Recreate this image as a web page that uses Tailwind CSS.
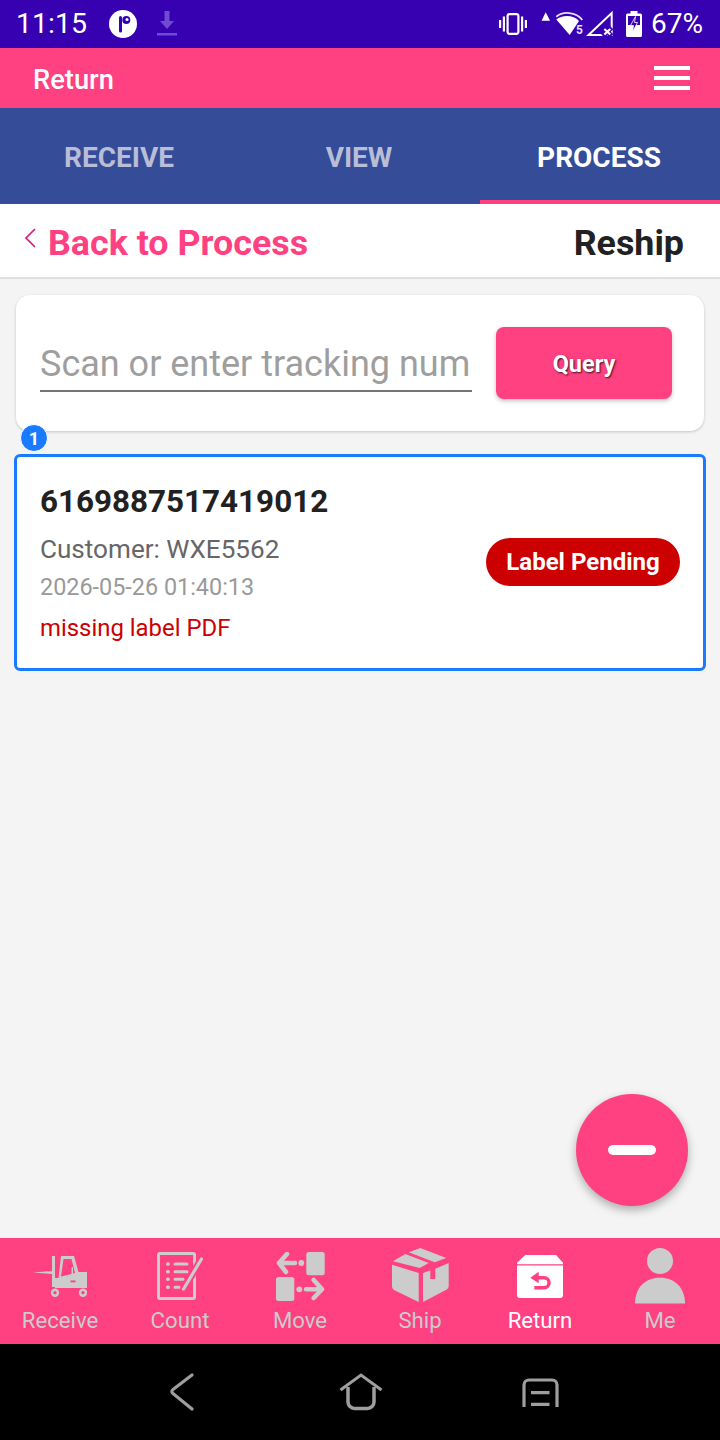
<!DOCTYPE html>
<html lang="en">
<head>
    <meta charset="UTF-8">
    <meta name="viewport" content="width=device-width, initial-scale=1.0">
    <title>Return</title>
    <script src="https://cdn.jsdelivr.net/npm/@tailwindcss/browser@4"></script>
</head>
<body class="bg-[#f4f4f4] font-['Roboto',sans-serif]">
<div class="relative flex h-[1440px] w-[720px] flex-col overflow-hidden">
    <!-- status bar -->
    <div class="flex h-12 shrink-0 items-center bg-[#3700b0] pl-[16px] pr-[17px] text-white">
        <span class="text-[28.5px] leading-none">11:15</span>
        <svg class="ml-[22px]" width="28" height="28" viewBox="0 0 28 28"><circle cx="14" cy="14" r="14" fill="#fff"/><path d="M11.500 7.500V21" stroke="#3700b0" stroke-width="3" stroke-linecap="round"/><circle cx="17.300" cy="10" r="4" fill="#3700b0"/><circle cx="18" cy="9.500" r="1.500" fill="#fff"/></svg>
        <svg class="ml-[19px]" width="22" height="28" viewBox="0 0 22 28"><path d="M8.500 1h5v10h4.500l-7 8-7-8h4.500zM1 23h20v2.500H1z" fill="#6f4bd0"/></svg>
        <div class="ml-auto flex items-center">
            <svg width="28" height="22" viewBox="0 0 28 22" fill="#fff"><rect x="0" y="7" width="2.200" height="8"/><rect x="25.800" y="7" width="2.200" height="8"/><rect x="3.800" y="3.500" width="2.200" height="15"/><rect x="22" y="3.500" width="2.200" height="15"/><rect x="8.600" y="1.200" width="10.800" height="19.600" rx="2" fill="none" stroke="#fff" stroke-width="2.200"/></svg>
            <svg class="ml-[14px]" width="72" height="28" viewBox="0 0 72 28" fill="#fff">
                <path d="M0.500 10.700h8.500L4.700 2.300z"/>
                <path d="M15.300 9.500C21 4.500 33 4.800 38 11L28.700 25z"/>
                <path d="M15.300 6.700C21.500 1.300 35 1.200 41.300 10" fill="none" stroke="#e6def6" stroke-width="1.800"/>
                <text x="35" y="24" font-size="12" font-weight="700" fill="#e6def6" font-family="Roboto">5</text>
                <path d="M47.500 25L70.700 3v22z" fill="none" stroke="#fff" stroke-width="2"/>
                <path d="M62 17.500l8.500 8.500m0-8.500L62 26" stroke="#3700b0" stroke-width="5"/>
                <path d="M63.300 19l6 5.500m0-5.500l-6 5.500" stroke="#fff" stroke-width="2.200"/>
            </svg>
            <svg class="ml-[13px]" width="16" height="26" viewBox="0 0 16 26"><path d="M4.500 0h7v2.500h3a1.500 1.500 0 0 1 1.500 1.500V24.500a1.500 1.500 0 0 1-1.500 1.500H1.500A1.500 1.500 0 0 1 0 24.500V4a1.500 1.500 0 0 1 1.500-1.500h3z" fill="#fff"/><rect x="2" y="5" width="12" height="9" fill="#3700b0"/><path d="M9.500 5.500L4.500 14.500h3l-1 6.500 5-9.500H8.500z" fill="#3700b0" stroke="#fff" stroke-width="0.800"/></svg>
            <span class="ml-[9px] text-[28px] leading-none">67%</span>
        </div>
    </div>

    <!-- title bar -->
    <div class="flex h-[60px] shrink-0 items-center justify-between bg-[#ff4081] pl-[33px] pr-[30px] text-white">
        <span class="pt-[4px] text-[27.3px] font-medium">Return</span>
        <div class="flex w-9 flex-col gap-[6px]">
            <div class="h-[4px] bg-white"></div>
            <div class="h-[4px] bg-white"></div>
            <div class="h-[4px] bg-white"></div>
        </div>
    </div>

    <!-- tabs -->
    <div class="grid h-[96px] shrink-0 grid-cols-3 bg-[#354c99] text-[28px] font-bold">
        <div class="flex items-center justify-center pr-[2px] pt-[4px] text-[#b9bed6]">RECEIVE</div>
        <div class="flex items-center justify-center pr-[2px] pt-[4px] text-[#b9bed6]">VIEW</div>
        <div class="flex items-center justify-center border-b-4 border-[#ff4081] pr-[2px] pt-[8px] text-white">PROCESS</div>
    </div>

    <!-- sub header -->
    <div class="flex h-[75px] shrink-0 items-center border-b-2 border-[#e0e0e0] bg-white pl-[24px] pr-[36px] pt-[6px]">
        <svg class="mb-[12px]" width="13" height="22" viewBox="0 0 13 22"><path d="M11 2L2 11l9 9" fill="none" stroke="#d81b78" stroke-width="1.700"/></svg>
        <span class="ml-[11px] text-[35.8px] font-bold leading-none text-[#ff4081]">Back to Process</span>
        <span class="ml-auto text-[35.8px] font-bold leading-none text-[#212121]">Reship</span>
    </div>

    <!-- content -->
    <div class="relative flex-1 px-[14px]">
        <div class="mx-[2px] mt-[16px] flex h-[136px] items-start rounded-[14px] bg-white pl-[24px] pr-[32px] shadow-[0_1px_3px_rgba(0,0,0,0.2)]">
            <div class="mt-[43px] h-[54px] w-[432px] overflow-hidden whitespace-nowrap border-b-2 border-[#757575] text-[36px] leading-[52px] text-[#9e9e9e]">Scan or enter tracking num</div>
            <div class="ml-[24px] mt-[32px] flex h-[72px] w-[176px] items-center justify-center rounded-[8px] bg-[#ff4081] pt-[3px] text-[23.5px] font-bold text-white shadow-[0_2px_4px_rgba(0,0,0,0.25)] [text-shadow:1px_1px_2px_rgba(0,0,0,0.75)]">Query</div>
        </div>
        <div class="relative mt-[23px] flex h-[217px] items-center rounded-[6px] border-[3px] border-[#1a7bff] bg-white pl-[23px] pr-[23px]">
            <div class="absolute left-[3px] -top-[33px] flex h-[28px] w-[28px] items-center justify-center rounded-full border border-white bg-[#1a7bff] text-[18px] font-bold text-white">1</div>
            <div class="flex-1 self-start pt-[26px]">
                <div class="text-[31.4px] font-bold leading-[38px] text-[#212121]">6169887517419012</div>
                <div class="mt-[12px] text-[26.1px] leading-[32px] text-[#666666]">Customer: WXE5562</div>
                <div class="mt-[7px] text-[23.4px] leading-[30px] text-[#999999]">2026-05-26 01:40:13</div>
                <div class="mt-[10px] text-[23.9px] leading-[32px] text-[#cc0000]">missing label PDF</div>
            </div>
            <div class="mb-[2px] flex h-[48px] w-[194px] items-center justify-center rounded-full bg-[#cc0000] text-[24px] font-bold text-white">Label Pending</div>
        </div>
        <div class="absolute bottom-[32px] right-[32px] flex h-[112px] w-[112px] items-center justify-center rounded-full bg-[#ff4081] shadow-[0_4px_10px_rgba(0,0,0,0.3)]">
            <div class="h-[10px] w-[48px] rounded-full bg-white"></div>
        </div>
    </div>

    <!-- bottom tabs -->
    <div class="grid h-[106px] shrink-0 grid-cols-6 bg-[#ff4081] text-[22.2px] leading-none text-[#cccccc]">
        <div class="flex flex-col items-center">
            <svg class="mt-[18px]" width="54" height="41" viewBox="0 0 54 41" fill="#cccccc"><path d="M0 16.500l19-1.500v3zM19 0h3v31h-3z"/><path d="M28 0h13l4.500 16H54V32H22V22h3.500zM30.500 3L28 20.500l10.500-2.500V11H40v6.500l2-.500L38.500 3z" fill-rule="evenodd"/><rect x="37.500" y="24.500" width="5" height="1.800" fill="#ff4081"/><circle cx="22" cy="36.700" r="4.200"/><circle cx="50" cy="36.700" r="4.200"/><circle cx="22" cy="36.700" r="1.600" fill="#ff4081"/><circle cx="50" cy="36.700" r="1.600" fill="#ff4081"/></svg>
            <span class="mb-[13px] mt-auto">Receive</span>
        </div>
        <div class="flex flex-col items-center">
            <svg class="mt-[14px]" width="46" height="48" viewBox="0 0 46 48" fill="none" stroke="#cccccc"><rect x="1.500" y="1.500" width="36" height="45" rx="1.500" stroke-width="3"/><path d="M18 12h12M18 19.700h12M18 27.300h8M18 35.300h4" stroke-width="3" stroke-linecap="round"/><path d="M10.700 12h.5M10.700 19.700h.5M10.700 27.300h.5M10.700 35.300h.5" stroke-width="3.500" stroke-linecap="round"/><path d="M45 6.300L26.300 37.300" stroke="#ff4081" stroke-width="7"/><path d="M44.500 7L26.500 37" stroke-width="3.200" stroke-linecap="round"/></svg>
            <span class="mb-[13px] mt-auto">Count</span>
        </div>
        <div class="flex flex-col items-center">
            <svg class="mt-[14px]" width="49" height="49" viewBox="0 0 49 49" fill="#cccccc"><rect x="30.300" y="0" width="18.400" height="23.300" rx="2.500"/><rect x="0" y="25" width="18.300" height="24" rx="2.500"/><circle cx="25.300" cy="11" r="2.900"/><circle cx="23.300" cy="37.300" r="2.900"/><path d="M19 11H3M11 2L3 11l7 9" fill="none" stroke="#cccccc" stroke-width="4.500" stroke-linecap="round" stroke-linejoin="round"/><path d="M30 37.300h16M37.700 28l8.300 9.300-8.300 8.700" fill="none" stroke="#cccccc" stroke-width="4.500" stroke-linecap="round" stroke-linejoin="round"/></svg>
            <span class="mb-[13px] mt-auto">Move</span>
        </div>
        <div class="flex flex-col items-center">
            <svg class="mt-[10px]" width="57" height="54" viewBox="0 0 57 54" fill="#cccccc"><path d="M16.700 4.300L28.300 0l26 10-11.600 4.300z"/><path d="M1 13.300L13.300 6l23.400 9-9 5z"/><path d="M0 16.700l26.700 8.300v29L3 42.500Q0 41 0 38z"/><path d="M31 25l7.300-2.700V31h5V20.700L56.700 15v23.300q0 2-2 3.200L31 54z"/></svg>
            <span class="mb-[13px] mt-auto">Ship</span>
        </div>
        <div class="flex flex-col items-center text-white">
            <svg class="mt-[17px]" width="46" height="43" viewBox="0 0 46 43" fill="#fff"><path d="M8.300 0H39l7 7.700V9.300H0V7.700zM0 10.500h46V40a3 3 0 0 1-3 3H3a3 3 0 0 1-3-3z"/><path d="M21.700 16.700l-8.400 6 8.400 5.600v-3.800H27a3.300 3.300 0 0 1 0 6.600H17.300v3.500H27a6.800 6.800 0 0 0 0-13.600h-5.300z" fill="#ff4081"/></svg>
            <span class="mb-[13px] mt-auto">Return</span>
        </div>
        <div class="flex flex-col items-center">
            <svg class="mt-[10px]" width="50" height="56" viewBox="0 0 50 56" fill="#cccccc"><circle cx="25" cy="13" r="13"/><path d="M0 55.500C0 40 10 29.700 25 29.700S50 40 50 55.500z"/></svg>
            <span class="mb-[13px] mt-auto">Me</span>
        </div>
    </div>

    <!-- android nav -->
    <div class="flex h-[96px] shrink-0 items-center bg-black pl-[170px] pb-[1px]">
        <svg width="24" height="38" viewBox="0 0 24 38"><path d="M22 2L3 16.500c-1.500 1-1.500 3 0 4L22 36" fill="none" stroke="#9e9e9e" stroke-width="3.200" stroke-linecap="round"/></svg>
        <svg class="ml-[145px]" width="44" height="38" viewBox="0 0 44 38"><path d="M1.500 17L22 2l20.500 15" fill="none" stroke="#9e9e9e" stroke-width="3"/><path d="M9 14v15a6.500 6.500 0 0 0 6.500 6.500h13A6.500 6.500 0 0 0 35 29V14" fill="none" stroke="#9e9e9e" stroke-width="3.500"/></svg>
        <svg class="ml-[139px] mt-[2px]" width="37" height="30" viewBox="0 0 37 30"><path d="M2 29V7a5 5 0 0 1 5-5h23a5 5 0 0 1 5 5v22" fill="none" stroke="#9e9e9e" stroke-width="3.200"/><path d="M9 14.700h18.500M9 26.300h18.500" stroke="#9e9e9e" stroke-width="3.200"/></svg>
    </div>
</div>
</body>
</html>
